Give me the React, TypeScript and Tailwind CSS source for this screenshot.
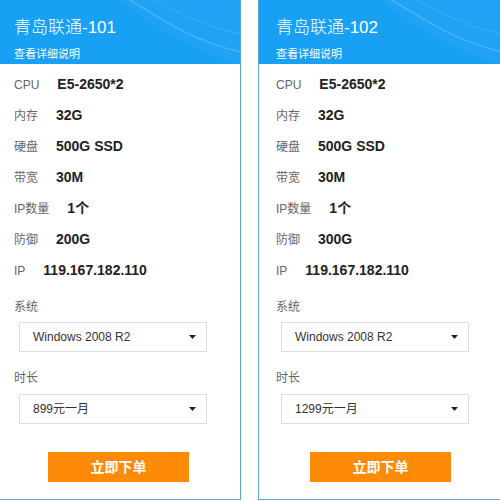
interface Spec {
    label: string;
    value: string;
}

interface Plan {
    title: string;
    specs: Spec[];
    os: string;
    price: string;
}

const plans: Plan[] = [
    {
        title: '青岛联通-101',
        specs: [
            { label: 'CPU', value: 'E5-2650*2' },
            { label: '内存', value: '32G' },
            { label: '硬盘', value: '500G SSD' },
            { label: '带宽', value: '30M' },
            { label: 'IP数量', value: '1个' },
            { label: '防御', value: '200G' },
            { label: 'IP', value: '119.167.182.110' },
        ],
        os: 'Windows 2008 R2',
        price: '899元一月',
    },
    {
        title: '青岛联通-102',
        specs: [
            { label: 'CPU', value: 'E5-2650*2' },
            { label: '内存', value: '32G' },
            { label: '硬盘', value: '500G SSD' },
            { label: '带宽', value: '30M' },
            { label: 'IP数量', value: '1个' },
            { label: '防御', value: '300G' },
            { label: 'IP', value: '119.167.182.110' },
        ],
        os: 'Windows 2008 R2',
        price: '1299元一月',
    },
];

// caret in the selects is a small filled triangle, not a chevron
const Caret = () => (
    <svg width="7" height="4" viewBox="0 0 7 4" className="shrink-0">
        <path d="M0 0 H7 L3.5 4 Z" fill="#222" />
    </svg>
);

const FakeSelect = ({ text, className }: { text: string; className: string }) => (
    <div
        className={`${className} ml-[5px] flex h-[30px] w-[188px] items-center justify-between border border-[#dedede] bg-white pl-[13px] pr-[10px] text-[12px] text-[#333]`}
    >
        <span>{text}</span>
        <Caret />
    </div>
);

const PlanCard = ({ plan }: { plan: Plan }) => (
    <div className="flex h-[500px] w-[245px] shrink-0 flex-col border-x border-b border-[#5aa5d8] bg-white">
        {/* Header */}
        <div className="relative h-[64px] overflow-hidden bg-[#17a0f4] px-[17px] text-white">
            <svg className="absolute right-0 top-0" width="120" height="64" viewBox="0 0 120 64" fill="none">
                <path d="M10 0 C40 18 70 40 120 52" stroke="rgba(255,255,255,0.18)" strokeWidth="1.5" />
                <path d="M35 0 C60 14 90 28 120 34" stroke="rgba(255,255,255,0.12)" strokeWidth="1" />
                <path d="M0 0 C30 25 70 50 120 64 L120 0 Z" fill="rgba(255,255,255,0.04)" />
            </svg>
            <div className="relative pt-[16px] text-[17px] font-light leading-[24px]">{plan.title}</div>
            <div className="relative mt-[7px] text-[11px] leading-[14px]">查看详细说明</div>
        </div>

        {/* Specs */}
        <div className="flex flex-col px-[17px] pt-[5px]">
            {plan.specs.map((s) => (
                <div key={s.label} className="flex h-[31px] items-center gap-[18px]">
                    <span className="text-[12px] text-[#666]">{s.label}</span>
                    <span className="text-[14px] font-bold text-[#222]">{s.value}</span>
                </div>
            ))}
        </div>

        {/* Options */}
        <div className="flex flex-col px-[17px]">
            <div className="mt-[11px] text-[12px] leading-[20px] text-[#666]">系统</div>
            <FakeSelect text={plan.os} className="mt-[5px]" />
            <div className="mt-[16px] text-[12px] leading-[20px] text-[#666]">时长</div>
            <FakeSelect text={plan.price} className="mt-[6px]" />
        </div>

        <button className="mx-auto mt-[28px] flex h-[30px] w-[141px] items-center justify-center bg-[#fd8b08] text-[14px] font-bold text-white">
            立即下单
        </button>
    </div>
);

export default function App() {
    return (
        <div
            className="h-[501px] w-[500px] overflow-hidden bg-white"
            style={{ fontFamily: '"Liberation Sans", "Noto Sans CJK SC", sans-serif' }}
        >
            <div className="-ml-[4px] flex gap-[17px]">
                {plans.map((p) => (
                    <PlanCard key={p.title} plan={p} />
                ))}
            </div>
        </div>
    );
}
